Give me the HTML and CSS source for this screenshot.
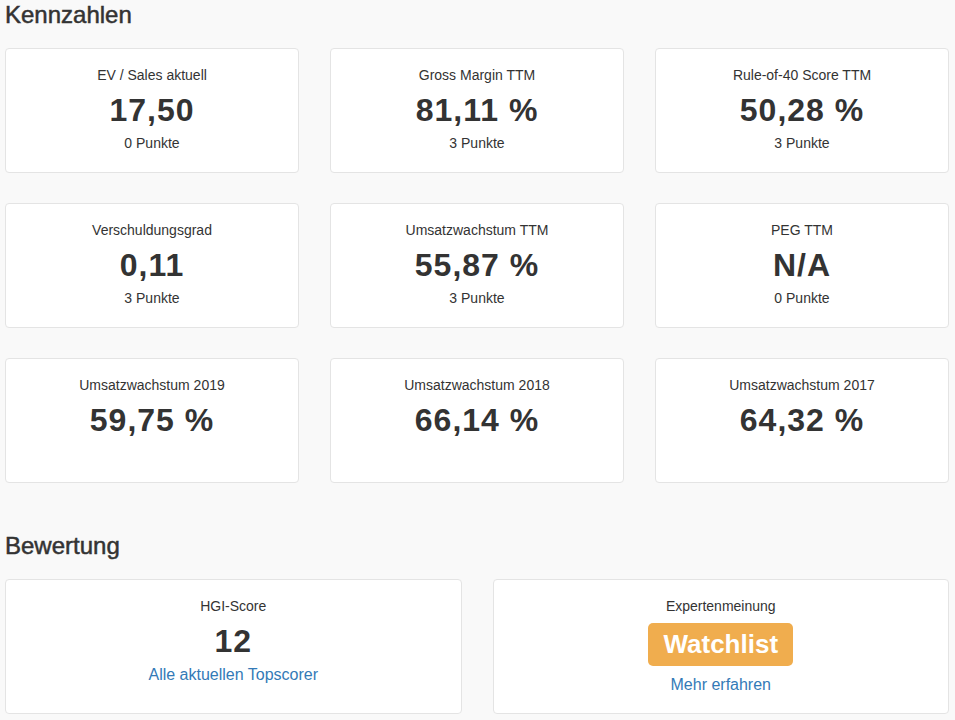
FILE: index.html
```html
<!DOCTYPE html>
<html lang="de">
<head>
<meta charset="utf-8">
<title>Kennzahlen</title>
<link rel="stylesheet" href="styles.css">
</head>
<body>
<main class="page">
  <section class="section">
    <h3 class="section-title">Kennzahlen</h3>
    <div class="grid grid-3">
      <div class="card">
        <div class="card-label">EV / Sales aktuell</div>
        <div class="card-value">17,50</div>
        <div class="card-points">0 Punkte</div>
      </div>
      <div class="card">
        <div class="card-label">Gross Margin TTM</div>
        <div class="card-value">81,11 %</div>
        <div class="card-points">3 Punkte</div>
      </div>
      <div class="card">
        <div class="card-label">Rule-of-40 Score TTM</div>
        <div class="card-value">50,28 %</div>
        <div class="card-points">3 Punkte</div>
      </div>
      <div class="card">
        <div class="card-label">Verschuldungsgrad</div>
        <div class="card-value">0,11</div>
        <div class="card-points">3 Punkte</div>
      </div>
      <div class="card">
        <div class="card-label">Umsatzwachstum TTM</div>
        <div class="card-value">55,87 %</div>
        <div class="card-points">3 Punkte</div>
      </div>
      <div class="card">
        <div class="card-label">PEG TTM</div>
        <div class="card-value">N/A</div>
        <div class="card-points">0 Punkte</div>
      </div>
      <div class="card">
        <div class="card-label">Umsatzwachstum 2019</div>
        <div class="card-value">59,75 %</div>
      </div>
      <div class="card">
        <div class="card-label">Umsatzwachstum 2018</div>
        <div class="card-value">66,14 %</div>
      </div>
      <div class="card">
        <div class="card-label">Umsatzwachstum 2017</div>
        <div class="card-value">64,32 %</div>
      </div>
    </div>
  </section>
  <section class="section section-rating">
    <h3 class="section-title">Bewertung</h3>
    <div class="grid grid-2">
      <div class="card card-rating">
        <div class="card-label">HGI-Score</div>
        <div class="card-value rating-value">12</div>
        <a class="card-link" href="#">Alle aktuellen Topscorer</a>
      </div>
      <div class="card card-rating">
        <div class="card-label">Expertenmeinung</div>
        <div class="badge-row"><span class="badge-watch">Watchlist</span></div>
        <a class="card-link link-expert" href="#">Mehr erfahren</a>
      </div>
    </div>
  </section>
</main>
</body>
</html>
```

FILE: styles.css
```css
html, body {
  margin: 0;
  padding: 0;
  background: #f9f9f9;
}

body {
  font-family: "Liberation Sans", Arial, Helvetica, sans-serif;
  color: #333333;
  font-size: 14px;
  line-height: 20px;
}

.page {
  width: 944px;
  padding: 2px 0 0 5px;
}

.section-title {
  margin: 0 0 20px 0;
  font-size: 24px;
  line-height: 26px;
  font-weight: normal;
  color: #333333;
  -webkit-text-stroke: 0.5px #333333;
}

.section-rating {
  margin-top: 50px;
}

.grid {
  display: grid;
  column-gap: 31px;
  row-gap: 30px;
}

.grid-3 {
  grid-template-columns: repeat(3, 1fr);
}

.grid-2 {
  grid-template-columns: repeat(2, 1fr);
}

.card {
  box-sizing: border-box;
  height: 125px;
  background: #ffffff;
  border: 1px solid #e4e4e4;
  border-radius: 4px;
  padding: 16px 10px 0 10px;
  text-align: center;
  display: flex;
  flex-direction: column;
  align-items: center;
}

.card-label {
  font-size: 14px;
  line-height: 20px;
}

.card-value {
  margin-top: 7px;
  margin-bottom: 5px;
  font-size: 32px;
  line-height: 36px;
  font-weight: bold;
  letter-spacing: 1px;
}

.card-points {
  font-size: 14px;
  line-height: 20px;
}

.card-rating {
  height: 135px;
  padding-top: 16px;
}

.rating-value {
  margin-top: 7px;
  margin-bottom: 5px;
}

.card-link {
  font-size: 16px;
  line-height: 22px;
  color: #337ab7;
  text-decoration: none;
}

.badge-row {
  margin-top: 7px;
}

.badge-watch {
  display: inline-block;
  background: #f0ad4e;
  color: #ffffff;
  font-weight: bold;
  font-size: 26px;
  line-height: 31px;
  padding: 6px 15px;
  border-radius: 5px;
}

.link-expert {
  margin-top: 8px;
}
```
